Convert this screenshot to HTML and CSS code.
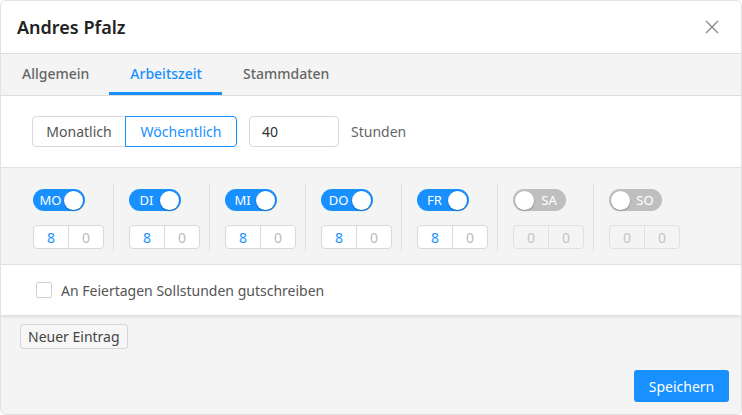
FILE: index.html
```html
<!DOCTYPE html>
<html lang="de">
<head>
  <meta charset="UTF-8" />
  <title>Andres Pfalz</title>
  <link rel="stylesheet" href="styles.css">
</head>
<body>

<div class="dialog">
  <!-- Header -->
  <div class="dialog-header">
    <h1>Andres Pfalz</h1>
    <button class="close" aria-label="Schließen">
      <svg width="14" height="14" viewBox="0 0 14 14"><path d="M1 1L13 13M13 1L1 13" stroke="#8c8c8c" stroke-width="1.4" fill="none"/></svg>
    </button>
  </div>

  <!-- Tabs -->
  <div class="tabs">
    <a class="tab">Allgemein</a>
    <a class="tab active">Arbeitszeit</a>
    <a class="tab">Stammdaten</a>
  </div>

  <!-- Mode -->
  <div class="mode-row">
    <div class="btn-group">
      <button class="seg">Monatlich</button>
      <button class="seg active">Wöchentlich</button>
    </div>
    <input class="hours" type="text" value="40">
    <span class="unit">Stunden</span>
  </div>

  <!-- Days -->
  <div class="days">
    <div class="day">
      <div class="switch on"><span class="label">MO</span><span class="knob"></span></div>
      <div class="time"><span class="h">8</span><span class="m">0</span></div>
    </div>
    <div class="day">
      <div class="switch on"><span class="label">DI</span><span class="knob"></span></div>
      <div class="time"><span class="h">8</span><span class="m">0</span></div>
    </div>
    <div class="day">
      <div class="switch on"><span class="label">MI</span><span class="knob"></span></div>
      <div class="time"><span class="h">8</span><span class="m">0</span></div>
    </div>
    <div class="day">
      <div class="switch on"><span class="label">DO</span><span class="knob"></span></div>
      <div class="time"><span class="h">8</span><span class="m">0</span></div>
    </div>
    <div class="day">
      <div class="switch on"><span class="label">FR</span><span class="knob"></span></div>
      <div class="time"><span class="h">8</span><span class="m">0</span></div>
    </div>
    <div class="day">
      <div class="switch off"><span class="knob"></span><span class="label">SA</span></div>
      <div class="time disabled"><span class="h">0</span><span class="m">0</span></div>
    </div>
    <div class="day">
      <div class="switch off"><span class="knob"></span><span class="label">SO</span></div>
      <div class="time disabled"><span class="h">0</span><span class="m">0</span></div>
    </div>
  </div>

  <!-- Holidays -->
  <div class="holiday-row">
    <label class="check"><span class="box"></span>An Feiertagen Sollstunden gutschreiben</label>
  </div>

  <!-- Footer -->
  <div class="dialog-footer">
    <button class="btn-default">Neuer Eintrag</button>
    <button class="btn-primary">Speichern</button>
  </div>
</div>

</body>
</html>
```

FILE: styles.css
```css
* { box-sizing: border-box; margin: 0; padding: 0; }
body { font-family: 'Noto Sans', 'Open Sans', sans-serif; background: #fff; color: #333; width: 742px; height: 415px; }
button, input { font-family: inherit; }

.dialog { width: 742px; height: 415px; border: 1px solid #e2e2e2; border-radius: 6px; overflow: hidden; display: flex; flex-direction: column; background: #f4f4f4; }

.dialog-header { height: 53px; background: #fff; border-bottom: 1px solid #ddd; display: flex; align-items: center; justify-content: space-between; padding: 0 22px 0 16px; }
.dialog-header h1 { font-size: 18px; font-weight: 600; color: #222; }
.close { background: none; border: none; display: flex; cursor: pointer; }

.tabs { height: 42px; background: #f4f4f4; border-bottom: 1px solid #ddd; display: flex; }
.tab { padding: 1px 20px 0 21px; font-size: 14px; font-weight: 500; color: #666; display: flex; align-items: center; height: 41px; border-bottom: 3px solid transparent; cursor: pointer; }
.tab.active { color: #1890ff; border-bottom-color: #1890ff; }

.mode-row { height: 72px; background: #fff; border-bottom: 1px solid #e2e2e2; display: flex; align-items: center; padding: 0 31px; }
.btn-group { display: flex; }
.seg { height: 31px; padding: 0 12px; font-size: 14px; color: #555; background: #fff; border: 1px solid #d9d9d9; cursor: pointer; }
.seg:first-child { border-radius: 4px 0 0 4px; width: 94px; }
.seg.active { color: #1890ff; border-color: #1890ff; border-radius: 0 4px 4px 0; margin-left: -1px; width: 112px; }
.hours { width: 90px; height: 31px; margin-left: 12px; border: 1px solid #d9d9d9; border-radius: 4px; padding: 0 12px; font-size: 14px; color: #333; }
.unit { margin-left: 12px; font-size: 14px; color: #666; }

.days { height: 97px; background: #f4f4f4; border-bottom: 1px solid #e2e2e2; display: flex; padding: 21px 0 0 32px; }
.day { width: 81px; height: 68px; margin-right: 15px; margin-top: -6px; padding-top: 6px; border-right: 1px solid #e0e0e0; display: flex; flex-direction: column; gap: 14px; }
.day:last-child { border-right: none; }
.switch { width: 53px; height: 22px; border-radius: 11px; display: flex; align-items: center; padding: 0 2px; font-size: 13px; color: #fff; }
.switch .label { flex: 1; text-align: center; }
.switch .knob { width: 19px; height: 19px; border-radius: 50%; background: #fff; box-shadow: 0 1px 2px rgba(0,0,0,0.25); }
.switch.on { background: #1890ff; width: 52px; }
.switch.on .label { padding-left: 2px; }
.switch.off { background: #bfbfbf; }
.time { display: flex; width: 71px; height: 24px; border: 1px solid #d9d9d9; border-radius: 4px; background: #fff; font-size: 14px; overflow: hidden; }
.time span { flex: 1; display: flex; align-items: center; justify-content: center; }
.time .h { color: #1890ff; border-right: 1px solid #d9d9d9; }
.time .m { color: #bbb; }
.time.disabled { background: #f4f4f4; border-color: #e0e0e0; }
.time.disabled .h { color: #c4c4c4; border-right-color: #e0e0e0; }
.time.disabled .m { color: #c4c4c4; }

.holiday-row { height: 50px; background: #fff; display: flex; align-items: center; padding-left: 35px; box-shadow: 0 2px 3px rgba(0,0,0,0.1); position: relative; }
.check { display: flex; align-items: center; font-size: 14px; color: #555; gap: 9px; }
.check .box { width: 16px; height: 16px; border: 1px solid #d0d0d0; border-radius: 2px; background: #fff; }

.dialog-footer { flex: 1; background: #f4f4f4; display: flex; justify-content: space-between; align-items: flex-start; padding: 9px 12px 0 19px; }
.btn-default { height: 25px; padding: 0 7px; font-size: 14px; color: #444; background: #f6f6f6; border: 1px solid #d6d6d6; border-radius: 3px; }
.btn-primary { margin-top: 46px; height: 32px; width: 95px; font-size: 14px; color: #fff; background: #1890ff; border: none; border-radius: 3px; }
```
